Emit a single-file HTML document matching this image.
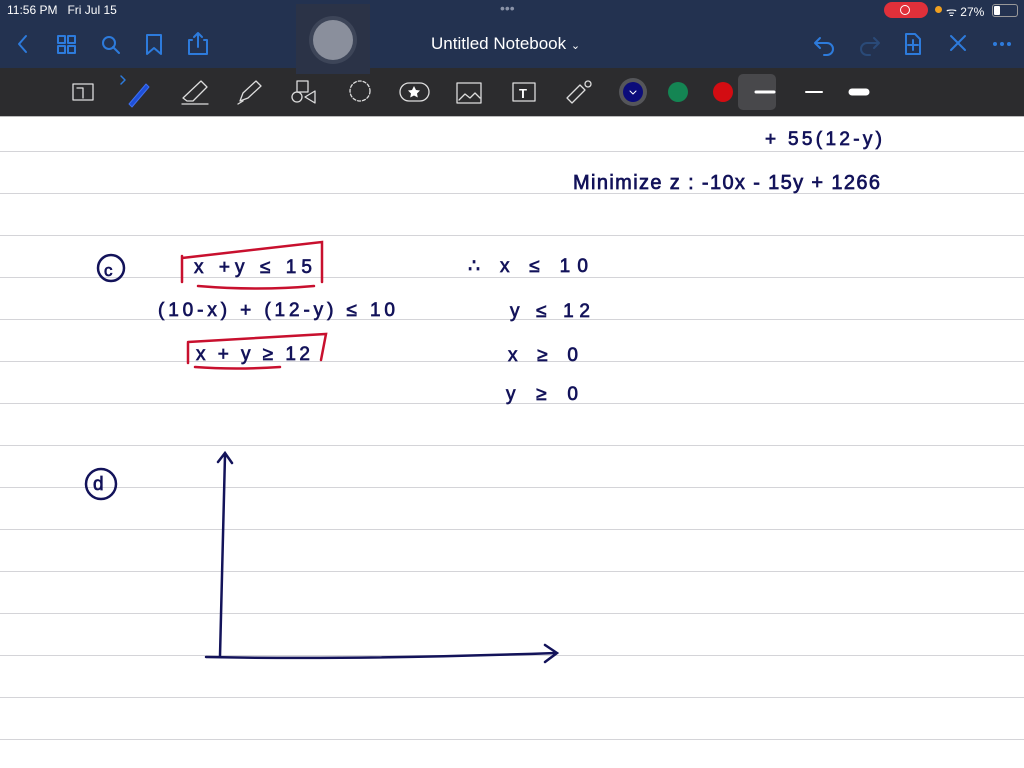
<!DOCTYPE html>
<html><head><meta charset="utf-8"><style>
body{margin:0;width:1024px;height:768px;overflow:hidden;background:#fff;font-family:"Liberation Sans",sans-serif;position:relative}
.hdr{position:absolute;left:0;top:0;width:1024px;height:68px;background:#233250}
.tb{position:absolute;left:0;top:68px;width:1024px;height:48px;background:#2c2c2e}
.paper{position:absolute;left:0;top:116px;width:1024px;height:652px;background:#fff}
.ln{position:absolute;left:0;width:1024px;height:1px;background:#d4d4d8}
.t{position:absolute;color:#fff}
</style></head><body>
<div class="hdr"></div>
<div class="tb"></div>
<div class="t" style="left:7px;top:3px;font-size:12px">11:56 PM&nbsp;&nbsp; Fri Jul 15</div>
<div class="t" style="left:500px;top:0px;font-size:14px;color:#8a93a8">•••</div>
<div style="position:absolute;left:884px;top:2px;width:44px;height:16px;border-radius:8px;background:#e0303a"></div>
<div style="position:absolute;left:900px;top:5px;width:8px;height:8px;border-radius:50%;border:1.5px solid #fff"></div>
<div style="position:absolute;left:935px;top:6px;width:7px;height:7px;border-radius:50%;background:#f0a020"></div>
<div class="t" style="left:946px;top:3px;font-size:12px">ᯤ 27%</div>
<div style="position:absolute;left:992px;top:4px;width:24px;height:11px;border:1px solid #999;border-radius:3px"><div style="width:6px;height:9px;margin:1px;background:#fff;border-radius:1px"></div></div>
<div style="position:absolute;left:296px;top:4px;width:74px;height:70px;background:#2b3347"></div>
<div style="position:absolute;left:313px;top:20px;width:40px;height:40px;border-radius:50%;background:#8a8f9c;box-shadow:0 0 0 4px #3d4558"></div>
<div class="t" style="left:431px;top:34px;font-size:17px">Untitled Notebook <span style="font-size:11px">⌄</span></div>
<svg style="position:absolute;left:0;top:0" width="1024" height="116" fill="none" stroke="#2d7bdc" stroke-width="2" stroke-linecap="round" stroke-linejoin="round">
<path d="M26 36l-7 8 7 8"/>
<rect x="58" y="36" width="7" height="7"/><rect x="68" y="36" width="7" height="7"/><rect x="58" y="46" width="7" height="7"/><rect x="68" y="46" width="7" height="7"/>
<circle cx="109" cy="43" r="6"/><path d="M113 47l6 6"/>
<path d="M147 35h14v19l-7-6-7 6z"/>
<path d="M192 40h-3v14h18v-14h-3M198 47v-13M194 37l4-4 4 4"/>
<path d="M820 38l-5 5 5 5M815 43h12a6 6 0 010 12h-3"/>
<path d="M874 38l5 5-5 5M879 43h-12a6 6 0 000 12h3" stroke="#2a4a78"/>
<path d="M906 34h9l5 5v15h-14z M913 40v10M908 45h10"/>
<path d="M951 36l14 14M965 36l-14 14"/>
<g fill="#2d7bdc" stroke="none"><circle cx="995" cy="44" r="2"/><circle cx="1002" cy="44" r="2"/><circle cx="1009" cy="44" r="2"/></g>
<g stroke="#ddd" stroke-width="1.3">
<rect x="73" y="84" width="20" height="16"/><path d="M77 88h6v10"/>
<path d="M183 98l18-17 6 6-14 14h-6zM182 104h26"/>
<path d="M240 101l3-8 13-12 5 5-13 12zM238 104l5-3"/>
<rect x="297" y="81" width="11" height="11"/><circle cx="297" cy="97" r="5"/><path d="M305 97l10-6v12z"/>
<circle cx="360" cy="91" r="10" stroke-dasharray="3 2"/>
<rect x="400" y="83" width="29" height="18" rx="9"/>
<rect x="457" y="83" width="24" height="20"/><path d="M459 100l6-6 5 4 5-5 5 5"/>
<rect x="513" y="83" width="22" height="18"/>
<path d="M567 98l13-13 5 5-13 13z"/><circle cx="588" cy="84" r="3"/>
</g>
<g fill="#fff" stroke="none"><path d="M414 86l2 4 4 .5-3 3 .8 4-3.8-2-3.8 2 .8-4-3-3 4-.5z"/><text x="519" y="98" font-size="13" font-weight="bold" font-family="Liberation Sans">T</text></g>
<path d="M129 104l17-20 3 3-17 20z" fill="#1e4fd8" stroke="#3d6ff0" stroke-width="1"/>
<path d="M121 76l4 4-4 4" stroke="#2d7bdc" stroke-width="1.5"/>
<rect x="738" y="74" width="38" height="36" rx="5" fill="#48484b" stroke="none"/>
<path d="M756 92h18" stroke="#fff" stroke-width="3"/>
<path d="M806 92h16" stroke="#fff" stroke-width="2"/>
<path d="M852 92h14" stroke="#fff" stroke-width="7"/>
<circle cx="633" cy="92" r="14" fill="#55565a" stroke="none"/>
<circle cx="633" cy="92" r="10" fill="#0b0c7a" stroke="none"/>
<path d="M630 91l3 3 3-3" stroke="#fff" stroke-width="1"/>
<circle cx="678" cy="92" r="10" fill="#148553" stroke="none"/>
<circle cx="723" cy="92" r="10" fill="#d30c12" stroke="none"/>
</svg>
<div class="paper"></div>
<div class="ln" style="top:116px;background:#bbb"></div>
<div class="ln" style="top:151px"></div><div class="ln" style="top:193px"></div><div class="ln" style="top:235px"></div><div class="ln" style="top:277px"></div><div class="ln" style="top:319px"></div><div class="ln" style="top:361px"></div><div class="ln" style="top:403px"></div><div class="ln" style="top:445px"></div><div class="ln" style="top:487px"></div><div class="ln" style="top:529px"></div><div class="ln" style="top:571px"></div><div class="ln" style="top:613px"></div><div class="ln" style="top:655px"></div><div class="ln" style="top:697px"></div><div class="ln" style="top:739px"></div>
<svg style="position:absolute;left:0;top:0" width="1024" height="768" fill="none" stroke-linecap="round">
<g font-family="Liberation Sans" fill="#13135a" stroke="#13135a" stroke-width="0.7" font-size="19" lengthAdjust="spacing">
<text x="765" y="145" textLength="117" lengthAdjust="spacing">+ 55(12-y)</text>
<text x="573" y="189" font-size="20" textLength="307" lengthAdjust="spacing">Minimize  z :  -10x - 15y + 1266</text>
<text x="194" y="273" textLength="118" lengthAdjust="spacing">x +y  ≤  15</text>
<text x="158" y="316" textLength="237" lengthAdjust="spacing">(10-x) + (12-y)  ≤  10</text>
<text x="196" y="360" textLength="114" lengthAdjust="spacing">x + y  ≥ 12</text>
<text x="468" y="272" textLength="120" lengthAdjust="spacing">∴   x  ≤  10</text>
<text x="510" y="317" textLength="80" lengthAdjust="spacing">y  ≤  12</text>
<text x="508" y="361" textLength="70" lengthAdjust="spacing">x  ≥  0</text>
<text x="506" y="400" textLength="72" lengthAdjust="spacing">y  ≥  0</text>
<text x="104" y="276" font-size="17">c</text>
<text x="93" y="490" font-size="19">d</text>
</g>
<g stroke="#13135a" stroke-width="2.5">
<circle cx="111" cy="268" r="13"/><circle cx="101" cy="484" r="15"/>
<path d="M225 455L220 656M218 462l7-9 7 10"/>
<path d="M206 657q150 3 350-4M545 645l12 8-12 9"/>
</g>
<g stroke="#c8102e" stroke-width="2.5">
<path d="M182 256v26M182 258l140-16v40"/><path d="M198 286q60 5 116 0"/>
<path d="M188 343v20M188 342l138-8-5 26"/><path d="M195 367q40 3 85 0"/>
</g>
</svg>
</body></html>
